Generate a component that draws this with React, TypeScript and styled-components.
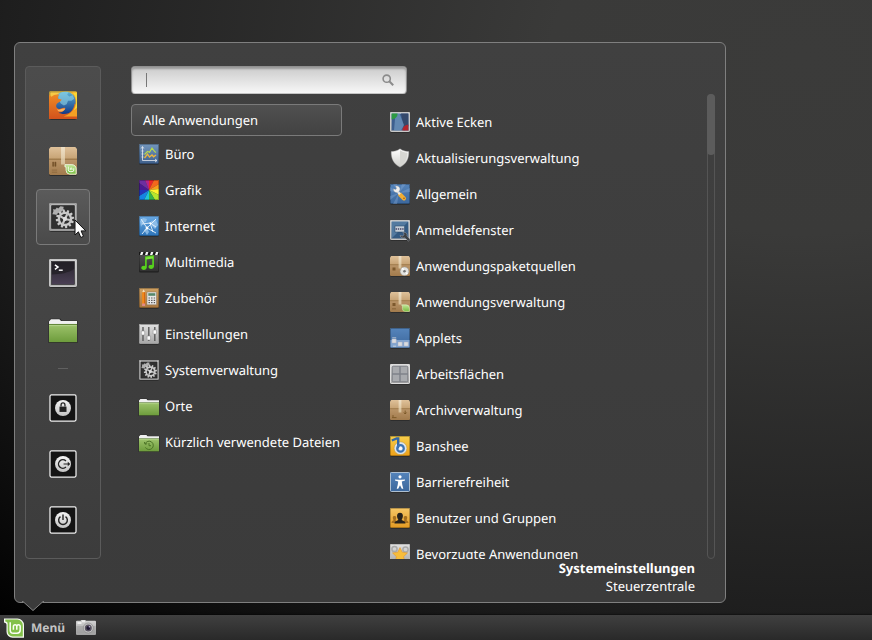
import React from "react";
import styled, { createGlobalStyle } from "styled-components";

const GlobalStyle = createGlobalStyle`
  *, *::before, *::after { box-sizing: border-box; }
  body {
    margin: 0;
    font-family: "Noto Sans", "Open Sans", sans-serif;
    font-size: 13px;
    text-rendering: geometricPrecision;
    color: #fff;
    background: #000;
  }
  button { font: inherit; color: inherit; cursor: default; text-rendering: inherit; }
  ul { list-style: none; margin: 0; padding: 0; }
`;

const Desktop = styled.main`
  display: flex;
  flex-direction: column;
  justify-content: flex-end;
  min-height: 100vh;
  background: radial-gradient(
    131% 125% at 92% 9%,
    #3b3b3a 0%,
    #3a3a39 22%,
    #1e1e1e 70%,
    #000 100%
  );
`;

const MenuWindow = styled.section`
  position: relative;
  display: flex;
  flex-direction: column;
  width: min(712px, 100% - 28px);
  margin: 14px 14px 12px;
  padding: 23px 10px 7px;
  border: 1px solid #7f7f7f;
  border-radius: 6px;
  background: linear-gradient(#404040, #3b3b3b);
`;

const MenuArrow = styled.svg`
  position: absolute;
  left: 7px;
  top: 100%;
  width: 22px;
  height: 11px;
  margin-top: -1px;
`;

const MenuBody = styled.div`
  display: flex;
  gap: 30px;
`;

const Sidebar = styled.nav`
  flex: none;
  display: flex;
  flex-direction: column;
  align-items: center;
  width: 76px;
  padding: 10px 0;
  border: 1px solid #5b5b5b;
  border-radius: 4px;
  background: linear-gradient(#4c4c4c, #3c3c3c);
`;

const FavoriteButton = styled.button<{ $active?: boolean }>`
  position: relative;
  display: grid;
  place-items: center;
  width: 54px;
  height: 56px;
  padding: 0;
  border: 1px solid ${(p) => (p.$active ? "#7a7a7a" : "transparent")};
  border-radius: 4px;
  background: ${(p) => (p.$active ? "linear-gradient(#5b5b5b, #4a4a4a)" : "none")};
`;

const SidebarDivider = styled.hr`
  width: 10px;
  height: 1px;
  margin: 11px 0;
  border: 0;
  background: #606060;
`;

const Pointer = styled.svg`
  position: absolute;
  left: 37px;
  top: 29px;
  width: 13px;
  height: 20px;
`;

const Content = styled.div`
  flex: 1;
  min-width: 0;
  display: flex;
  flex-direction: column;
`;

const SearchBox = styled.label`
  display: flex;
  align-items: center;
  width: 276px;
  max-width: 100%;
  height: 28px;
  padding: 0 12px 0 14px;
  border: 1px solid #909090;
  border-bottom-color: #c4c4c4;
  border-radius: 4px;
  background: linear-gradient(#cbcbcb, #f7f7f7);
  box-shadow: inset 0 2px 2px rgba(0, 0, 0, 0.25);
`;

const Caret = styled.span`
  width: 1px;
  height: 14px;
  background: #777;
`;

const SearchInput = styled.input`
  flex: 1;
  min-width: 0;
  padding: 0;
  border: 0;
  outline: 0;
  font: inherit;
  color: #333;
  background: none;
`;

const Lists = styled.div`
  flex: 1;
  min-height: 0;
  display: flex;
`;

const CategoryList = styled.ul`
  flex: 0 1 211px;
  min-width: 0;
  padding-top: 10px;
`;

const CategoryAll = styled.button`
  display: block;
  width: 100%;
  height: 32px;
  padding: 0 11px;
  text-align: left;
  border: 1px solid #7a7a7a;
  border-radius: 4px;
  background: linear-gradient(#505050, #424242);
`;

const EntryButton = styled.button`
  display: flex;
  align-items: center;
  gap: 6px;
  width: 100%;
  height: 36px;
  padding: 0 0 0 8px;
  border: 0;
  background: none;
  text-align: left;
  white-space: nowrap;
`;

const AppPane = styled.div`
  flex: 1;
  min-width: 0;
  display: flex;
  margin-left: 40px;
`;

const AppViewport = styled.div`
  flex: 1 1 0;
  min-width: 0;
  margin-top: 10px;
  overflow: hidden;
  contain: size;
`;

const ScrollTrack = styled.div`
  flex: none;
  width: 8px;
  border: 1px solid #555;
  border-radius: 4px;
`;

const ScrollThumb = styled.div`
  height: 61px;
  margin: -1px;
  border-radius: 4px;
  background: #5c5c5c;
`;

const Summary = styled.footer`
  padding-right: 20px;
  text-align: right;
  line-height: 18px;
`;

const SummaryTitle = styled.strong`
  display: block;
  font-weight: 700;
`;

const SummaryText = styled.span`
  display: block;
`;

const Taskbar = styled.footer`
  display: flex;
  align-items: center;
  gap: 11px;
  height: 25px;
  padding: 0 4px;
  background: linear-gradient(#404040, #292929);
  box-shadow: 0 0 2px #000;
`;

const MenuButton = styled.button`
  display: flex;
  align-items: center;
  gap: 7px;
  padding: 0;
  border: 0;
  background: none;
  font-size: 12px;
  font-weight: 700;
  color: #c3c3c3;
`;

const TrayButton = styled.button`
  display: flex;
  padding: 0;
  border: 0;
  background: none;
`;

const IconSvg = styled.svg<{ $size: number }>`
  display: block;
  flex: none;
  width: ${(p) => p.$size}px;
  height: ${(p) => p.$size}px;
  overflow: visible;
`;

const Definitions = styled.svg`
  position: absolute;
  width: 0;
  height: 0;
`;

const gradients: [string, string, string][] = [
  ["blue", "#7396bd", "#3f608c"],
  ["sky", "#6aa9e4", "#2d74b8"],
  ["deep", "#5584bb", "#3c679c"],
  ["dark", "#555", "#303030"],
  ["wood", "#cfa163", "#a8763e"],
  ["silver", "#e2e2e2", "#a5a5a5"],
  ["frame", "#d4d4d4", "#a0a0a0"],
  ["night", "#28242c", "#4b4055"],
  ["green", "#9cc26a", "#6d9c3c"],
  ["boxTop", "#dfc19a", "#c5a172"],
  ["boxFront", "#bb966a", "#a27b4d"],
  ["tape", "#f3e8d2", "#dfcca8"],
  ["gold", "#f8cf4c", "#eda019"],
  ["amber", "#f6c766", "#e29a22"],
  ["white", "#f4f4f4", "#c4c4c4"],
  ["shield", "#ffffff", "#cfcfcb"],
  ["leaf", "#c4e69a", "#76bb3e"],
  ["fox", "#ee8a24", "#d3521c"],
  ["globe", "#5fb4d6", "#0d2f80"],
];

function Gradients() {
  return (
    <Definitions aria-hidden="true">
      <defs>
        {gradients.map(([id, from, to]) => (
          <linearGradient key={id} id={id} x1="0" y1="0" x2="0" y2="1">
            <stop offset="0" stopColor={from} />
            <stop offset="1" stopColor={to} />
          </linearGradient>
        ))}
      </defs>
    </Definitions>
  );
}

function gearPath(cx: number, cy: number, outer: number, inner: number, teeth: number) {
  const points: string[] = [];
  const step = (Math.PI * 2) / teeth;
  for (let i = 0; i < teeth; i++) {
    [[0, inner], [0.15, outer], [0.55, outer], [0.7, inner]].forEach(([t, r]) => {
      const a = (i + t) * step + 0.2;
      points.push(`${(cx + r * Math.cos(a)).toFixed(2)} ${(cy + r * Math.sin(a)).toFixed(2)}`);
    });
  }
  return `M${points.join("L")}Z`;
}

function Plate({ fill, stroke = "rgba(0,0,0,.25)" }: { fill: string; stroke?: string }) {
  return (
    <>
      <rect x="0" y="1" width="20" height="19.6" rx="1.6" fill="#000" opacity=".5" />
      <rect x="0" y="0" width="20" height="20" rx="1.4" fill={`url(#${fill})`} />
      <rect x=".5" y=".5" width="19" height="19" rx="1" fill="none" stroke={stroke} />
    </>
  );
}

function Carton() {
  return (
    <>
      <rect y="1" width="20" height="19.6" rx="1.4" fill="#000" opacity=".5" />
      <path d="M1.2 0h17.6L20 1.500V9H0V1.500z" fill="url(#boxTop)" />
      <path d="M0 8.400h20V19q0 1-1 1H1q-1 0-1-1z" fill="url(#boxFront)" />
      <path d="M0 8.700h20" stroke="#94703f" strokeWidth=".7" />
      <path d="M8.600 0h2.800v12.500H8.600z" fill="url(#tape)" opacity=".8" />
    </>
  );
}

function Gears() {
  return (
    <>
      <path d="M2.400 8l.8-2.200-.4-1.400 1.700.2 1.100-1.300 1 .6 1.600-1.500 2.300.2-.3 1.700 1 .5-2 1-1 1.600-1.600-.4-1.400 1.600-1-.4z" fill="#b0b0b0" />
      <path d={gearPath(11.4, 11.4, 6.6, 5.1, 12)} fill="#c9c9c9" />
      <circle cx="11.400" cy="11.400" r="3.500" fill="#303030" />
      <path d="M11.400 11.400L8.200 9.600m3.200 1.800l1.600-3.400m-1.600 3.400l3.600.8m-3.600-.8l-1.600 3.400" stroke="#c9c9c9" strokeWidth="1.500" />
      <circle cx="11.400" cy="11.400" r="1.500" fill="#ddd" />
    </>
  );
}

function FolderShape() {
  return (
    <>
      <path d="M-.4 20V5l1.200-2.300h7.400l1 1.400h11.200V20z" fill="#222" opacity=".8" />
      <path d="M0 9V4.600L1.400 3h6L8.600 4.300H20V9z" fill="#f0f0f0" />
      <path d="M0 6.400h20v1H0z" fill="#567a2e" />
      <path d="M0 7h20v12.400H0z" fill="url(#green)" />
      <path d="M.2 7.600h19.600" stroke="#b9d792" strokeWidth=".6" />
    </>
  );
}

function SessionFrame({ children }: { children: React.ReactNode }) {
  return (
    <>
      <rect x=".7" y=".7" width="18.600" height="18.600" rx="1" fill="#141414" stroke="#ededed" strokeWidth=".9" />
      <circle cx="10" cy="10" r="5.700" fill="url(#white)" />
      {children}
    </>
  );
}

const drawings: Record<string, React.ReactNode> = {
  firefox: (
    <>
      <Plate fill="gold" />
      <circle cx="11.500" cy="9" r="8.500" fill="url(#globe)" />
      <path d="M6.500 2.500l3-1.800 4.500-.2-1 2.200 1.500 1.300 2.500-1 1 2.500-2 1.500-2.400 0-1 2.400-2 1-2.200-1.500-1.700-3z" fill="#8fd3e6" opacity=".6" />
      <path d="M0 2.500l1.800 1.600c1.800-1.600 3.600-1.900 5.700-1.400-1 .8-1.200 1.700-.9 2.900l2.400.5c-.3 1.400-1.900 1.800-3.200 2.900-1.300 1.600-.6 3.600 1.200 3.800 1.700.2 2.900-1.300 4.700-.7-.7 2.200-3 3.500-5 3.300 3.200 1.900 7.600 1.200 9.800-1.700 1-1.400 1.600-3 1.700-4.700l1.800 2V20H0z" fill="url(#fox)" />
      <path d="M15.800.8c3.200 2.800 4 7.200 2.400 11-1.300 3-4.200 5.400-7.800 6.400H20V.8z" fill="#f3a024" />
      <path d="M16.600 1c2.900 3 3.500 6.700 2.200 10.300L17.600 14 20 12V1z" fill="#f9d936" />
      <path d="M5.600 13.100c2.200 1 3.500-1 6.100-.4-1.200 1.900-3.300 2.300-5 1.800z" fill="#f9b45f" />
    </>
  ),
  software: (
    <>
      <Carton />
      <path d="M2.600 10.800h.8v3h-.8zM4.200 10.800H5v3h-.8zM2 16.500h3.800M2 18h3.800" fill="#6d4a22" stroke="#7c5a30" strokeWidth=".4" />
      <path d="M11.400 12.600h5a3 3 0 0 1 3 3v3.800h-4.600a2.800 2.800 0 0 1-2.600-2.800v-2.400h-.8z" fill="url(#leaf)" stroke="#f3fbe9" strokeWidth=".6" />
      <path d="M13.800 14v2.300q0 1.300 1.300 1.300h1.400q1.200 0 1.200-1.200v-1.200M15.200 16.400v-1.100q.6-.7 1.200 0v1.100" fill="none" stroke="#f7fff0" strokeWidth=".7" />
    </>
  ),
  system: (
    <>
      <Plate fill="frame" stroke="#999" />
      <rect x="1.900" y="1.900" width="16.200" height="16.200" fill="#303030" stroke="#222" strokeWidth=".5" />
      <Gears />
    </>
  ),
  terminal: (
    <>
      <Plate fill="silver" stroke="#c4c4c4" />
      <rect x="1.800" y="1.800" width="16.400" height="16.400" fill="url(#night)" stroke="#222" strokeWidth=".4" />
      <path d="M2 11c6 0 12-1 16-4V2H2z" fill="#211f24" opacity=".75" />
      <path d="M4.200 4.200l2.300 1.600-2.300 1.600" fill="none" stroke="#fff" strokeWidth="1" />
      <path d="M7 8h2.800" stroke="#fff" strokeWidth="1" />
    </>
  ),
  folder: <FolderShape />,
  lock: (
    <SessionFrame>
      <path d="M8.600 9V7.800a1.400 1.400 0 0 1 2.800 0V9" fill="none" stroke="#222" strokeWidth=".9" />
      <rect x="7.500" y="9" width="5" height="3.800" fill="#222" />
    </SessionFrame>
  ),
  logout: (
    <SessionFrame>
      <path d="M12.100 7.800a3.100 3.100 0 1 0 0 4.400" fill="none" stroke="#222" strokeWidth="1" />
      <path d="M10.400 9.600h3V8.400L15.200 10l-1.800 1.600v-1.200h-3z" fill="#222" />
    </SessionFrame>
  ),
  power: (
    <SessionFrame>
      <path d="M8.200 7.600a3.100 3.100 0 1 0 3.600 0" fill="none" stroke="#222" strokeWidth="1" />
      <path d="M10 6v4" stroke="#222" strokeWidth="1" />
    </SessionFrame>
  ),
  office: (
    <>
      <Plate fill="blue" />
      <path d="M3.500 3v13.500H18M2.200 4.500l1.300-2 1.300 2M16 15l2 1.500-2 1.500M2.500 7h2M2.500 10h2M2.500 13h2" fill="none" stroke="#e4e9ef" strokeWidth=".8" />
      <path d="M5.500 10.500l3-3 2 .8L13 4l2.500 3.400L17 8.500" fill="none" stroke="#b7d94c" strokeWidth="1.200" />
      <path d="M5.500 14l3-4 2 3 2.500-2 1.600 1.800L17 11" fill="none" stroke="#eeb53b" strokeWidth="1.300" />
    </>
  ),
  graphics: (
    <>
      <path d="M10 10L6 0H0v3z" fill="#6c2fa0" />
      <path d="M10 10L6 0h4z" fill="#b3248c" />
      <path d="M10 10V0h5z" fill="#e8252a" />
      <path d="M10 10l5-10h5v4z" fill="#f4671c" />
      <path d="M10 10l10-6v5z" fill="#f99d1c" />
      <path d="M10 10l10-1v6z" fill="#fff32b" />
      <path d="M10 10l10 5v5h-4z" fill="#b6e62e" />
      <path d="M10 10l6 10h-6z" fill="#37b34a" />
      <path d="M10 10v10H5z" fill="#20c5d7" />
      <path d="M10 10L5 20H0v-4z" fill="#1584e2" />
      <path d="M10 10L0 16v-6z" fill="#2433b8" />
      <path d="M10 10H0V3z" fill="#4a1a92" />
      <rect x=".5" y=".5" width="19" height="19" fill="none" stroke="#000" strokeOpacity=".25" />
    </>
  ),
  internet: (
    <>
      <Plate fill="sky" />
      <path d="M1 5l3-3 4 1-1 3-3 1-2 4zM12 5l5-1 2 5-3 4-3-3zM5 14l3-2 2 4-2 3z" fill="#a5cdf0" opacity=".7" />
      <path d="M2 3l6 9 9-9M8 12L3 18M8 12l9 5M3 8l8-1 6 4M11 7l3 9" fill="none" stroke="#e8f3fc" strokeWidth=".9" />
      <circle cx="8" cy="12" r="1.400" fill="#fff" />
      <circle cx="11.500" cy="7.300" r="1.100" fill="#fff" />
    </>
  ),
  multimedia: (
    <>
      <Plate fill="dark" />
      <path d="M0 0h20v3H0z" fill="#181818" />
      <path d="M2 0h2.400L3.400 3H1zM7 0h2.400l-1 3H6zM12 0h2.400l-1 3H11zM17 0h2.400l-1 3H16z" fill="#f2f2f2" />
      <path d="M6.900 15.500V5.200l7.200-1v10.500" fill="none" stroke="#57d31d" strokeWidth="1.700" />
      <path d="M6.900 6.400l7.200-1" stroke="#7ee43c" strokeWidth="2" />
      <ellipse cx="5" cy="15.800" rx="2.700" ry="2.100" fill="#57d31d" />
      <ellipse cx="12.200" cy="14.800" rx="2.700" ry="2.100" fill="#57d31d" />
    </>
  ),
  accessories: (
    <>
      <Plate fill="wood" />
      <path d="M3.100 4.300l1.500-3 1.500 3z" fill="#f5dfba" />
      <path d="M3.100 4.300h3v12h-3z" fill="#f08a1c" />
      <path d="M5.100 4.300h1v12h-1z" fill="#d8620f" />
      <path d="M3.100 15.500h3v2.500h-3z" fill="#e08b88" />
      <rect x="8" y="4" width="9.500" height="12.800" rx=".6" fill="#e8e8e8" stroke="#80735e" strokeWidth=".5" />
      <path d="M9.300 5.200h7v2.600h-7z" fill="#55876b" />
      <path d="M9.500 10h6.700M9.500 12.300h6.700M9.500 14.600h6.700" stroke="#555" strokeWidth="1.200" strokeDasharray="1.400 1.200" />
    </>
  ),
  preferences: (
    <>
      <Plate fill="silver" stroke="#999" />
      <path d="M4 3v14M9.800 3v14M15.800 3v14" stroke="#555" strokeWidth="1.300" />
      <path d="M2.300 7h3.400v4H2.300zM8.100 12h3.400v4H8.100zM14.100 6h3.400v4h-3.400z" fill="#fafafa" stroke="#888" strokeWidth=".5" />
    </>
  ),
  recent: (
    <>
      <FolderShape />
      <path d="M6.200 11.800a4.200 4.200 0 1 1 .2 3.600M5.400 10l.6 2.200 2.200-.5M10 11v2.700h2" fill="none" stroke="#4c7427" strokeWidth="1" />
    </>
  ),
  corners: (
    <>
      <Plate fill="silver" stroke="#c9c9c9" />
      <rect x="1.600" y="1.600" width="16.800" height="16.800" fill="#3d5f8f" />
      <path d="M11 1.600h7.400V14l-4 4.400z" fill="#34496c" />
      <path d="M5.500 1.600h4L14 13l-3 5.400H4z" fill="#7ca3c9" opacity=".6" />
      <path d="M1.600 1.600h6q0 5-6 6z" fill="#2c9a43" />
      <path d="M18.400 18.400h-6q0-5 6-6z" fill="#b3242c" />
    </>
  ),
  shield: (
    <>
      <path d="M10 .8c2.600 2 5.400 2.700 8.800 2.800.2 6.500-2 12.200-8.800 15.600C3.200 15.800 1 10.100 1.200 3.600 4.600 3.500 7.400 2.800 10 .8z" fill="url(#shield)" stroke="#999" strokeWidth=".4" />
      <path d="M10 2.300c2.200 1.500 4.700 2.300 7.400 2.500 0 5.500-2 10-7.400 13z" fill="#d6d6d2" />
    </>
  ),
  general: (
    <>
      <Plate fill="deep" />
      <path d="M9 9L0 3v4zM9 9L3 0h4zM9 9L12 0h4zM9 9l11-5v4zM9 9L3 20h4zM9 9L0 12v4z" fill="#8cb0da" opacity=".35" />
      <path d="M10 10.500l4 4" stroke="#f0ad35" strokeWidth="4" strokeLinecap="round" />
      <path d="M6 6l4 4.200" stroke="#e8e8e8" strokeWidth="2.200" />
      <path d="M3.400 4.800l2.300.8.9-1.400-1.200-2a3.300 3.300 0 1 1-2 2.600z" fill="#eee" stroke="#888" strokeWidth=".3" />
      <circle cx="14" cy="14.300" r=".8" fill="#9c5a0a" />
    </>
  ),
  login: (
    <>
      <Plate fill="silver" stroke="#c4c4c4" />
      <rect x="1.600" y="1.600" width="16.800" height="16.800" fill="#345a82" />
      <path d="M1.600 1.600H18.400L1.600 18.400z" fill="#7299bd" opacity=".5" />
      <rect x="5" y="6" width="9.500" height="6" fill="#c5ced8" stroke="#22405f" strokeWidth=".5" />
      <path d="M5.600 9h8.600" stroke="#446" strokeWidth="1.400" strokeDasharray="1.400 .8" />
      <path d="M10 15.500l3 .6 1.200-2.200-1.500-1.300c3-.8 5 1 4.200 3.400l3.400 3.400-2 1.700-3.700-3.300c-2.300.6-4-.3-4.600-2.300z" fill="#3c4044" stroke="#b5b9bd" strokeWidth=".4" />
    </>
  ),
  sources: (
    <>
      <Carton />
      <path d="M2.500 11.500h3v3h-3z" fill="#7d592d" />
      <circle cx="14.500" cy="15.300" r="4.300" fill="#e3e3df" stroke="#999" strokeWidth=".5" />
      <path d="M14.500 15.300l-3-2.600 1.600-1.200zM14.500 15.300l3.500 2-1.200 1.400z" fill="#fff" />
      <circle cx="14.500" cy="15.300" r="1.300" fill="#777" />
    </>
  ),
  apps: (
    <>
      <Carton />
      <path d="M2.500 11h3v3h-3zM2 16.500h4v.8H2z" fill="#7d592d" />
      <path d="M11.500 12.800h4.600a3.300 3.300 0 0 1 3.300 3.200v3.400h-4.200a2.800 2.800 0 0 1-2.800-2.800v-2.400z" fill="url(#leaf)" stroke="#dff2c8" strokeWidth=".5" />
    </>
  ),
  applets: (
    <>
      <Plate fill="deep" />
      <path d="M.5 12h19v7.500H.5z" fill="#82a5d0" />
      <path d="M2.200 9.500h4v.8h-4zM3 17.800h3v.8H3z" fill="#ddd" />
      <path d="M2 11h4.200v4H2zM8 14h4.200v4H8zM14 14h4.200v4H14z" fill="#d9dce0" stroke="#aab" strokeWidth=".4" />
    </>
  ),
  workspaces: (
    <>
      <Plate fill="silver" stroke="#ddd" />
      <rect x="2.200" y="2.200" width="15.600" height="15.600" rx="1" fill="#a8aaae" stroke="#7c7e84" strokeWidth="1" />
      <path d="M10 2v16M2 10h16" stroke="#7f828a" strokeWidth="1.500" />
    </>
  ),
  archive: (
    <>
      <Carton />
      <path d="M15.200 10.500v3.500M13.800 12.500l1.400 1.500 1.400-1.500M2 16h2M2 17.600h4.500" fill="none" stroke="#74501f" strokeWidth=".8" />
    </>
  ),
  banshee: (
    <>
      <Plate fill="gold" />
      <circle cx="10.500" cy="12.200" r="6.400" fill="#dce3ea" stroke="#b78a1a" strokeWidth=".4" />
      <path d="M1.800 4.500l5-2h1.400v10" fill="none" stroke="#3468a8" strokeWidth="2.400" />
      <circle cx="10.500" cy="12.400" r="3.300" fill="none" stroke="#3b73b4" strokeWidth="2.200" />
      <circle cx="10.500" cy="12.400" r="1.600" fill="#f6f8fb" />
    </>
  ),
  access: (
    <>
      <Plate fill="deep" stroke="#aebfd0" />
      <circle cx="10" cy="4.800" r="1.600" fill="#fff" />
      <path d="M5 7.400l4 .4h2l4-.4v1.200l-3.200 1 .5 3.400 1 3.800h-1.500L10 13.200l-1.800 3.600H6.700l1-3.800.5-3.400-3.200-1z" fill="#fff" />
    </>
  ),
  users: (
    <>
      <Plate fill="amber" />
      <path d="M1.500 15c0-2 1.500-2.200 2.200-2.700C2 9 3 8 4.500 8s2.500 1 1 4.300c1 .5 2 1 2 2.700zM12.500 15c0-2 1-2.200 2-2.700C13 9 14 8 15.500 8s2.500 1 1 4.300c1 .5 2 1 2 2.700z" fill="#a66f1e" />
      <path d="M4.500 15.500c0-2.600 2.600-2.600 3.900-3.600C6 8 7 4.700 10 4.700s4 3.300 1.600 7.200c1.300 1 3.900 1 3.900 3.600z" fill="#26221d" />
    </>
  ),
  favorites: (
    <>
      <Plate fill="silver" stroke="#bbb" />
      <circle cx="4.500" cy="5" r="2.600" fill="none" stroke="#aaa" strokeWidth="1.500" />
      <circle cx="15.500" cy="5.500" r="2.600" fill="none" stroke="#aaa" strokeWidth="1.500" />
      <path d="M10 3.500l2.200 4.700 5.300.7-3.800 3.700 1 5.400L10 15.400 5.300 18l1-5.400L2.500 8.900l5.300-.7z" fill="#f7bd3c" stroke="#e48f21" strokeWidth=".5" />
    </>
  ),
  mint: (
    <>
      <path d="M0 .5h13.500A6.500 6.500 0 0 1 20 7v12.700H8.500a6 6 0 0 1-6-6V6.400Q2.500 5 0 4.600z" fill="#f4f8ef" />
      <path d="M1.300 1.600h12A5.600 5.600 0 0 1 18.800 7v11.500H8.700a5 5 0 0 1-5-5V5.500Q3.600 3.600 1.300 3.600z" fill="#83c14a" />
      <path d="M6.200 4.200v7.700q0 3.300 3.300 3.300H13q3.200 0 3.200-3.200V8.500q0-1.800-1.700-1.800t-1.700 1.800v3.200M12.800 8.500q0-1.800-1.700-1.800T9.400 8.500v3.200" fill="none" stroke="#fbfff6" strokeWidth="1.500" />
    </>
  ),
  camera: (
    <>
      <path d="M1 2.700h3.500l.8-.7h4l.7.700h9q1 0 1 1V16q0 1-1 1H1q-1 0-1-1V3.700q0-1 1-1z" fill="url(#frame)" />
      <path d="M.5 8h19v7H.5z" fill="#999" opacity=".5" />
      <path d="M1.500 4h4v2h-4zM6 2.500h3v1.700H6z" fill="#eee" />
      <circle cx="12.300" cy="10" r="5" fill="#c8c8c8" stroke="#808080" strokeWidth=".6" />
      <circle cx="12.300" cy="10" r="3.500" fill="#5a5562" />
      <circle cx="12.300" cy="10" r="1.900" fill="#1d1630" />
      <circle cx="13.400" cy="8.800" r=".8" fill="#c0b5d8" />
    </>
  ),
};

function Icon({ name, size = 20 }: { name: string; size?: number }) {
  return (
    <IconSvg $size={size} viewBox="0 0 20 20" aria-hidden="true">
      {drawings[name]}
    </IconSvg>
  );
}

const favorites = [
  { icon: "firefox", label: "Firefox" },
  { icon: "software", label: "Anwendungsverwaltung" },
  { icon: "system", label: "Systemeinstellungen", active: true },
  { icon: "terminal", label: "Terminal" },
  { icon: "folder", label: "Dateien" },
];

const sessionActions = [
  { icon: "lock", label: "Bildschirm sperren" },
  { icon: "logout", label: "Abmelden" },
  { icon: "power", label: "Beenden" },
];

const categories = [
  { icon: "office", label: "Büro" },
  { icon: "graphics", label: "Grafik" },
  { icon: "internet", label: "Internet" },
  { icon: "multimedia", label: "Multimedia" },
  { icon: "accessories", label: "Zubehör" },
  { icon: "preferences", label: "Einstellungen" },
  { icon: "system", label: "Systemverwaltung" },
  { icon: "folder", label: "Orte" },
  { icon: "recent", label: "Kürzlich verwendete Dateien" },
];

const applications = [
  { icon: "corners", label: "Aktive Ecken" },
  { icon: "shield", label: "Aktualisierungsverwaltung" },
  { icon: "general", label: "Allgemein" },
  { icon: "login", label: "Anmeldefenster" },
  { icon: "sources", label: "Anwendungspaketquellen" },
  { icon: "apps", label: "Anwendungsverwaltung" },
  { icon: "applets", label: "Applets" },
  { icon: "workspaces", label: "Arbeitsflächen" },
  { icon: "archive", label: "Archivverwaltung" },
  { icon: "banshee", label: "Banshee" },
  { icon: "access", label: "Barrierefreiheit" },
  { icon: "users", label: "Benutzer und Gruppen" },
  { icon: "favorites", label: "Bevorzugte Anwendungen" },
];

function Entry({ icon, label }: { icon: string; label: string }) {
  return (
    <li>
      <EntryButton type="button">
        <Icon name={icon} />
        {label}
      </EntryButton>
    </li>
  );
}

export default function App() {
  return (
    <Desktop>
      <GlobalStyle />
      <Gradients />
      <MenuWindow aria-label="Menü">
        <MenuBody>
          <Sidebar aria-label="Favoriten">
            {favorites.map((item) => (
              <FavoriteButton key={item.label} type="button" aria-label={item.label} $active={item.active}>
                <Icon name={item.icon} size={28} />
                {item.active && (
                  <Pointer viewBox="0 0 13 20" aria-hidden="true">
                    <path d="M1 1v15l3.400-3.200 2.400 5.700 2.700-1.200-2.400-5.400h4.700z" fill="#fff" stroke="#111" strokeWidth="1" />
                  </Pointer>
                )}
              </FavoriteButton>
            ))}
            <SidebarDivider />
            {sessionActions.map((item) => (
              <FavoriteButton key={item.label} type="button" aria-label={item.label}>
                <Icon name={item.icon} size={28} />
              </FavoriteButton>
            ))}
          </Sidebar>
          <Content>
            <SearchBox>
              <Caret />
              <SearchInput type="text" aria-label="Suchen" />
              <IconSvg $size={12} viewBox="0 0 12 12" aria-hidden="true">
                <circle cx="4.700" cy="4.700" r="3.600" fill="none" stroke="#8b8b8b" strokeWidth="1.600" />
                <path d="M7.300 7.300l3.900 3.900" stroke="#8b8b8b" strokeWidth="2" />
              </IconSvg>
            </SearchBox>
            <Lists>
              <CategoryList>
                <li>
                  <CategoryAll type="button">Alle Anwendungen</CategoryAll>
                </li>
                {categories.map((item) => (
                  <Entry key={item.label} {...item} />
                ))}
              </CategoryList>
              <AppPane>
                <AppViewport>
                  <ul>
                    {applications.map((item) => (
                      <Entry key={item.label} {...item} />
                    ))}
                  </ul>
                </AppViewport>
                <ScrollTrack>
                  <ScrollThumb />
                </ScrollTrack>
              </AppPane>
            </Lists>
          </Content>
        </MenuBody>
        <Summary>
          <SummaryTitle>Systemeinstellungen</SummaryTitle>
          <SummaryText>Steuerzentrale</SummaryText>
        </Summary>
        <MenuArrow viewBox="0 0 22 11" aria-hidden="true">
          <path d="M0 0h22v1h-1L11 10 1 1H0z" fill="#3b3b3b" />
          <path d="M0 .5h1L11 9.500 21 .5h1" fill="none" stroke="#7f7f7f" />
        </MenuArrow>
      </MenuWindow>
      <Taskbar>
        <MenuButton type="button">
          <Icon name="mint" />
          Menü
        </MenuButton>
        <TrayButton type="button" aria-label="Bildschirmfoto">
          <Icon name="camera" />
        </TrayButton>
      </Taskbar>
    </Desktop>
  );
}
